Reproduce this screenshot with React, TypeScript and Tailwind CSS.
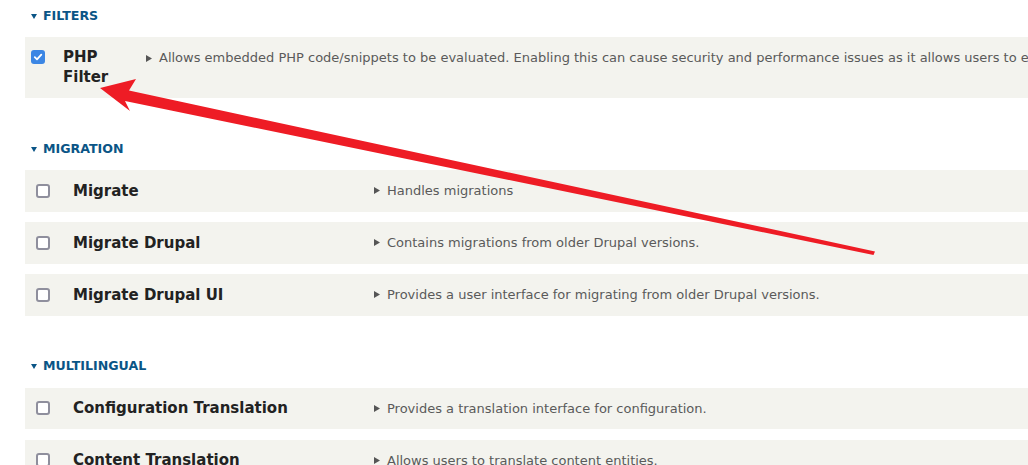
import React from "react";

const FONT = { fontFamily: '"DejaVu Sans", "Liberation Sans", sans-serif' };

function Box({ checked }: { checked?: boolean }) {
  if (checked) {
    return (
      <span className="flex h-[14px] w-[14px] shrink-0 items-center justify-center rounded-[3px] bg-[#3b86e4]">
        <svg width="10" height="10" viewBox="0 0 10 10">
          <path d="M1.8 5.2 L4 7.4 L8.3 2.6" fill="none" stroke="white" strokeWidth="1.8" strokeLinecap="round" strokeLinejoin="round" />
        </svg>
      </span>
    );
  }
  return <span className="block h-[14px] w-[14px] shrink-0 rounded-[3px] border-2 border-[#8f8f9d] bg-white" />;
}

function Bullet() {
  return (
    <svg width="6" height="7" viewBox="0 0 6 7" className="mr-[7px] shrink-0">
      <path d="M0 0 L6 3.5 L0 7 Z" fill="#555" />
    </svg>
  );
}

function Heading({ label }: { label: string }) {
  return (
    <div className="flex h-[30px] items-center pl-[6px] pt-[2px] mb-[7px]">
      <svg width="6" height="5" viewBox="0 0 6 5" className="mr-[6px]">
        <path d="M0 0 L6 0 L3 5 Z" fill="#0a5586" />
      </svg>
      <span className="text-[12.6px] font-bold uppercase leading-none text-[#0a5586]">{label}</span>
    </div>
  );
}

function Row({ title, desc }: { title: string; desc: string }) {
  return (
    <div className="flex h-[41.5px] items-center bg-[#f3f3ee] pl-[11px] whitespace-nowrap">
      <Box />
      <span className="ml-[23px] w-[301px] shrink-0 text-[15px] font-bold text-[#222]">{title}</span>
      <div className="flex items-center text-[13px] text-[#5a5a5a]">
        <Bullet />
        <span>{desc}</span>
      </div>
    </div>
  );
}

export default function App() {
  return (
    <div className="relative h-[465px] w-[1028px] overflow-hidden bg-white" style={FONT}>
      <div className="flex flex-col gap-[35px] pl-[25px]">
        <section>
          <Heading label="Filters" />
          <div className="flex items-start bg-[#f3f3ee] pl-[6px] pt-[10px] pb-[11px] whitespace-nowrap">
            <span className="mt-[3px]">
              <Box checked />
            </span>
            <span className="ml-[18px] w-[73px] shrink-0 whitespace-normal text-[15px] font-bold leading-[20px] text-[#222]">
              PHP Filter
            </span>
            <div className="ml-[10px] mt-[1px] flex h-[20px] items-center text-[13px] text-[#5a5a5a]">
              <Bullet />
              <span>
                Allows embedded PHP code/snippets to be evaluated. Enabling this can cause security and performance issues as it allows users to execute PHP code on your site.
              </span>
            </div>
          </div>
        </section>

        <section>
          <Heading label="Migration" />
          <div className="flex flex-col gap-[10.5px]">
            <Row title="Migrate" desc="Handles migrations" />
            <Row title="Migrate Drupal" desc="Contains migrations from older Drupal versions." />
            <Row title="Migrate Drupal UI" desc="Provides a user interface for migrating from older Drupal versions." />
          </div>
        </section>

        <section>
          <Heading label="Multilingual" />
          <div className="flex flex-col gap-[10.5px]">
            <Row title="Configuration Translation" desc="Provides a translation interface for configuration." />
            <Row title="Content Translation" desc="Allows users to translate content entities." />
          </div>
        </section>
      </div>

      <svg className="pointer-events-none absolute inset-0" width="1028" height="465" viewBox="0 0 1028 465">
        <polygon
          points="100,88 136,79 129,90.5 875,251.5 873.5,255 125,101 130,111"
          fill="#ee1c25"
        />
      </svg>
    </div>
  );
}
